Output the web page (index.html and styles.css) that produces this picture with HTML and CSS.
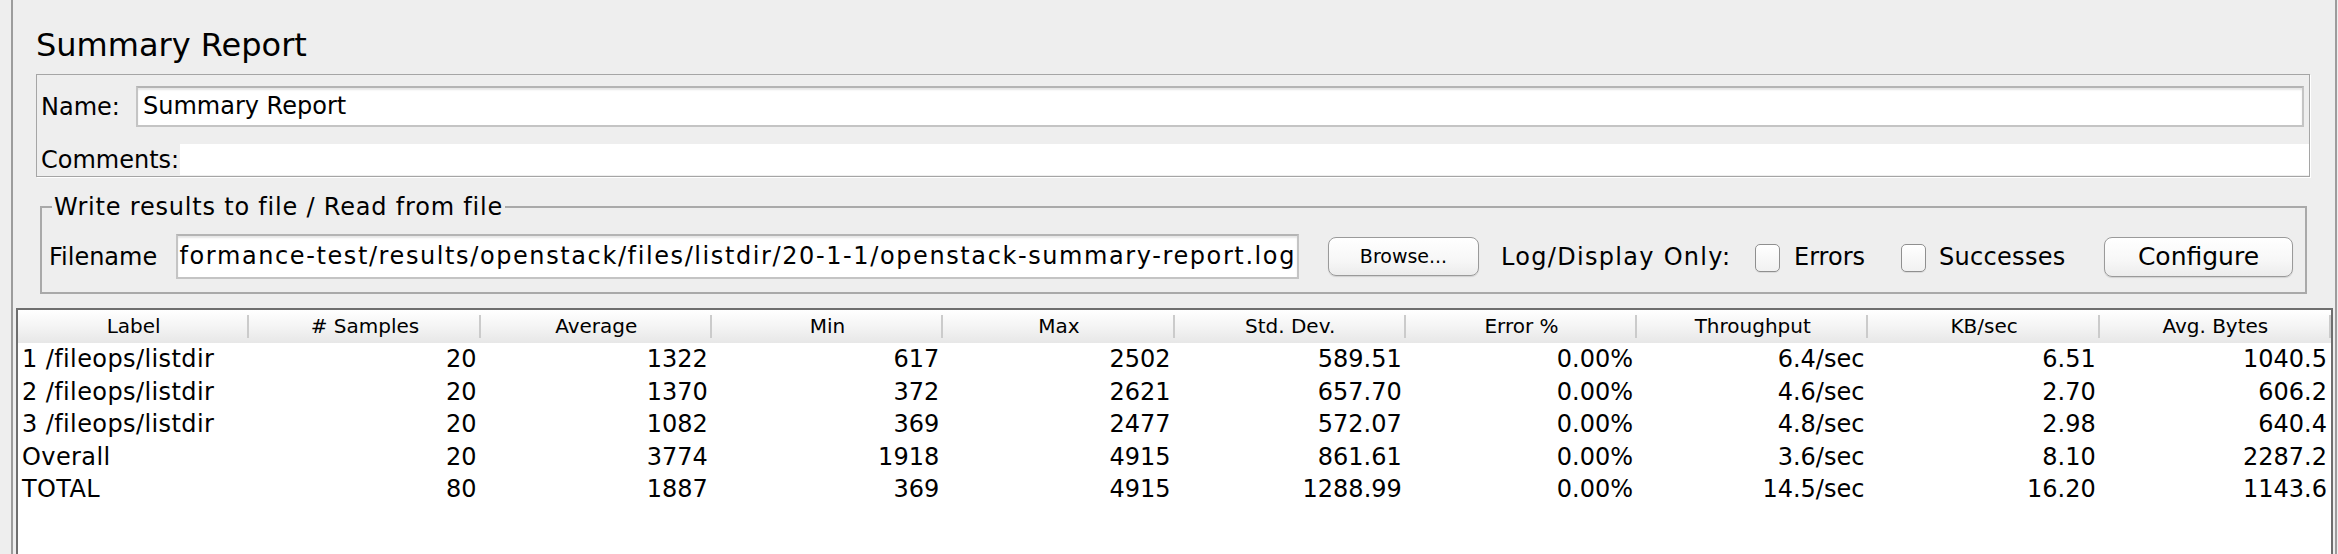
FILE: index.html
```html
<!DOCTYPE html>
<html>
<head>
<meta charset="utf-8">
<title>Summary Report</title>
<link rel="stylesheet" href="styles.css">
</head>
<body>
<div class="frame">
  <div class="title">Summary Report</div>
  <div class="namepanel">
    <div class="name-row">
      <span class="lbl name-lbl">Name:</span>
      <div class="field name-field">Summary Report</div>
    </div>
    <div class="comments-row">
      <span class="lbl">Comments:</span>
      <div class="comments-area"></div>
    </div>
  </div>
  <fieldset class="filebox">
    <legend class="legend">Write results to file / Read from file</legend>
    <div class="file-row">
      <span class="lbl file-lbl">Filename</span>
      <div class="field file-field"><span>formance-test/results/openstack/files/listdir/20-1-1/openstack-summary-report.log</span></div>
      <div class="btn browse">Browse...</div>
      <span class="lbl logonly">Log/Display Only:</span>
      <span class="check"></span>
      <span class="lbl errors">Errors</span>
      <span class="check"></span>
      <span class="lbl successes">Successes</span>
      <div class="btn configure">Configure</div>
    </div>
  </fieldset>
  <div class="table">
    <div class="thead">
      <div class="th">Label</div>
      <div class="th"># Samples</div>
      <div class="th">Average</div>
      <div class="th">Min</div>
      <div class="th">Max</div>
      <div class="th">Std. Dev.</div>
      <div class="th">Error %</div>
      <div class="th">Throughput</div>
      <div class="th">KB/sec</div>
      <div class="th">Avg. Bytes</div>
    </div>
    <div class="tr"><div class="td l">1 /fileops/listdir</div><div class="td">20</div><div class="td">1322</div><div class="td">617</div><div class="td">2502</div><div class="td">589.51</div><div class="td">0.00%</div><div class="td">6.4/sec</div><div class="td">6.51</div><div class="td">1040.5</div></div>
    <div class="tr"><div class="td l">2 /fileops/listdir</div><div class="td">20</div><div class="td">1370</div><div class="td">372</div><div class="td">2621</div><div class="td">657.70</div><div class="td">0.00%</div><div class="td">4.6/sec</div><div class="td">2.70</div><div class="td">606.2</div></div>
    <div class="tr"><div class="td l">3 /fileops/listdir</div><div class="td">20</div><div class="td">1082</div><div class="td">369</div><div class="td">2477</div><div class="td">572.07</div><div class="td">0.00%</div><div class="td">4.8/sec</div><div class="td">2.98</div><div class="td">640.4</div></div>
    <div class="tr"><div class="td l">Overall</div><div class="td">20</div><div class="td">3774</div><div class="td">1918</div><div class="td">4915</div><div class="td">861.61</div><div class="td">0.00%</div><div class="td">3.6/sec</div><div class="td">8.10</div><div class="td">2287.2</div></div>
    <div class="tr"><div class="td l">TOTAL</div><div class="td">80</div><div class="td">1887</div><div class="td">369</div><div class="td">4915</div><div class="td">1288.99</div><div class="td">0.00%</div><div class="td">14.5/sec</div><div class="td">16.20</div><div class="td">1143.6</div></div>
  </div>
</div>
</body>
</html>
```

FILE: styles.css
```css
html, body {
  margin: 0;
  padding: 0;
  background: #eeeeee;
  overflow: hidden;
}
body {
  font-family: "DejaVu Sans", "Liberation Sans", sans-serif;
  color: #000;
  font-size: 24px;
}
.frame {
  box-sizing: border-box;
  height: 554px;
  margin: 0 1px 0 11px;
  border-left: 2px solid #9c9c9c;
  border-right: 2px solid #9c9c9c;
  display: flex;
  flex-direction: column;
  overflow: hidden;
}
.title {
  margin: 29px 0 0 23px;
  font-size: 32px;
  line-height: 32px;
  height: 32px;
}
.namepanel {
  box-sizing: border-box;
  margin: 13px 25px 0 23px;
  height: 103px;
  border: 1px solid #a5a5a5;
  box-shadow: 1px 1px 0 #ffffff;
  padding: 11px 5px 0 4px;
  display: flex;
  flex-direction: column;
}
.lbl {
  white-space: nowrap;
  line-height: 28px;
}
.name-row {
  display: flex;
  align-items: center;
  height: 41px;
}
.name-lbl {
  width: 95px;
  flex: none;
}
.field {
  box-sizing: border-box;
  background: #fff;
  border: 2px solid #c4c4c4;
  border-top-color: #b4b4b4;
  box-shadow: inset 0 2px 2px #e6e6e6;
  white-space: nowrap;
  overflow: hidden;
}
.name-field {
  flex: 1;
  height: 41px;
  line-height: 37px;
  padding-left: 5px;
}
.comments-row {
  display: flex;
  align-items: center;
  margin-top: 17px;
  margin-right: -5px;
  height: 31px;
}
.comments-area {
  flex: 1;
  height: 31px;
  background: #fff;
  margin-left: 1px;
}
.filebox {
  margin: 16px 28px 0 27px;
  padding: 13px 0 13px 7px;
  border: 2px solid #a9a9a9;
  min-width: 0;
}
.legend {
  padding: 0 2px;
  margin-left: 3px;
  font-size: 24px;
  line-height: 28px;
  letter-spacing: 0.8px;
}
.file-row {
  display: flex;
  align-items: center;
  height: 45px;
}
.file-lbl {
  width: 127px;
  flex: none;
}
.file-field {
  width: 1123px;
  height: 45px;
  flex: none;
  line-height: 41px;
  padding: 0 1px 0 3px;
  display: flex;
  justify-content: flex-end;
  letter-spacing: 1.6px;
}
.file-field span {
  flex: none;
}
.btn {
  box-sizing: border-box;
  flex: none;
  text-align: center;
  border: 1px solid #9a9a9a;
  border-radius: 8px;
  background: linear-gradient(#ffffff, #f7f7f7 60%, #ececec);
  box-shadow: 0 1px 1px rgba(0,0,0,0.12);
}
.browse {
  margin-left: 29px;
  width: 151px;
  height: 39px;
  font-size: 19px;
  line-height: 37px;
}
.logonly {
  margin-left: 22px;
  width: 254px;
  flex: none;
  letter-spacing: 1.3px;
}
.check {
  box-sizing: border-box;
  flex: none;
  width: 25px;
  height: 28px;
  margin-top: 2px;
  border: 1px solid #8f8f8f;
  border-radius: 5px;
  background: linear-gradient(#ffffff, #f1f1f1);
  box-shadow: 0 1px 0 rgba(0,0,0,0.08);
}
.errors {
  margin-left: 14px;
  width: 107px;
  flex: none;
}
.successes {
  margin-left: 13px;
  width: 165px;
  flex: none;
  letter-spacing: 0.3px;
}
.configure {
  width: 189px;
  height: 40px;
  font-size: 25px;
  line-height: 37px;
}
.table {
  flex: 1;
  margin: 14px 2px 0 3px;
  border: 2px solid #6e6e6e;
  border-bottom: none;
  background: #fff;
}
.thead, .tr {
  display: grid;
  grid-template-columns: repeat(10, 1fr);
}
.thead {
  height: 33px;
  background: linear-gradient(#ffffff, #f4f4f4 50%, #e7e7e7);
}
.th {
  font-size: 20px;
  line-height: 33px;
  text-align: center;
  white-space: nowrap;
  position: relative;
}
.th::after {
  content: "";
  position: absolute;
  right: 0;
  top: 5px;
  bottom: 5px;
  width: 2px;
  background: #cbcbcb;
}
.tr {
  height: 32.5px;
}
.td {
  line-height: 32.5px;
  text-align: right;
  padding-right: 4px;
  white-space: nowrap;
}
.td.l {
  text-align: left;
  padding: 0 0 0 4px;
  letter-spacing: 0.4px;
}
```
